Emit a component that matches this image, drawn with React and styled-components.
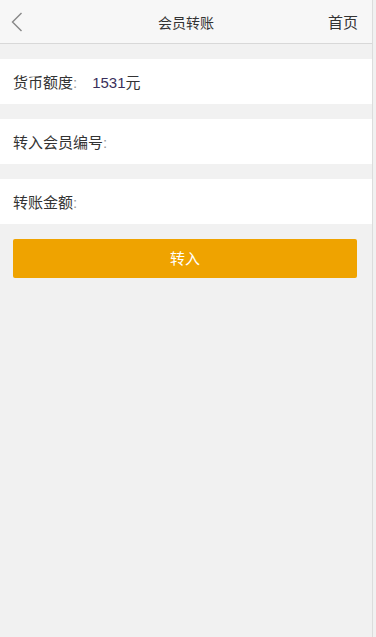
import styled, { createGlobalStyle } from "styled-components";

const GlobalStyle = createGlobalStyle`
  html, body {
    margin: 0;
    padding: 0;
    background: #f1f1f1;
  }
  body {
    font-family: "Liberation Sans", "Noto Sans CJK SC", Arial, sans-serif;
    color: #333;
  }
`;

const Page = styled.div`
  width: 372px;
  min-height: 637px;
  background: #f1f1f1;
  border-right: 1px solid #dcdcdc;
`;

const Header = styled.header`
  height: 43px;
  display: grid;
  grid-template-columns: 60px 1fr 60px;
  align-items: center;
  background: #f7f7f7;
  border-bottom: 1px solid #d8d8d8;
`;

const Back = styled.div`
  display: flex;
  align-items: center;
  padding-left: 11px;
`;

const Title = styled.h1`
  margin: 0;
  font-size: 14px;
  font-weight: normal;
  text-align: center;
  color: #333;
`;

const HomeLink = styled.a`
  font-size: 15px;
  color: #333;
  text-align: right;
  padding-right: 14px;
  text-decoration: none;
`;

const Form = styled.div`
  display: flex;
  flex-direction: column;
  gap: 15px;
  padding-top: 15px;
`;

const Row = styled.div`
  height: 45px;
  display: flex;
  align-items: center;
  padding: 0 13px;
  background: #fff;
  font-size: 15px;
`;

const Label = styled.span`
  color: #333;
`;

const Colon = styled.span`
  color: #999;
`;

const Value = styled.span`
  margin-left: 15px;
  color: #333;
`;

const Num = styled.span`
  color: #3a2f5a;
`;

const ButtonWrap = styled.div`
  padding: 0 15px 0 13px;
`;

const Submit = styled.button`
  width: 100%;
  height: 39px;
  border: none;
  border-radius: 2px;
  background: #efa300;
  color: #fff;
  font-size: 15px;
  font-family: inherit;
  line-height: 37px;
`;

export default function App() {
  return (
    <>
      <GlobalStyle />
      <Page>
        <Header>
          <Back>
            <svg width="12" height="20" viewBox="0 0 12 20">
              <path d="M10.5 1 L1.5 10 L10.5 19" fill="none" stroke="#888" strokeWidth="1.4" />
            </svg>
          </Back>
          <Title>会员转账</Title>
          <HomeLink>首页</HomeLink>
        </Header>
        <Form>
          <Row>
            <Label>货币额度<Colon>:</Colon></Label>
            <Value><Num>1531</Num>元</Value>
          </Row>
          <Row>
            <Label>转入会员编号<Colon>:</Colon></Label>
          </Row>
          <Row>
            <Label>转账金额<Colon>:</Colon></Label>
          </Row>
          <ButtonWrap>
            <Submit>转入</Submit>
          </ButtonWrap>
        </Form>
      </Page>
    </>
  );
}
